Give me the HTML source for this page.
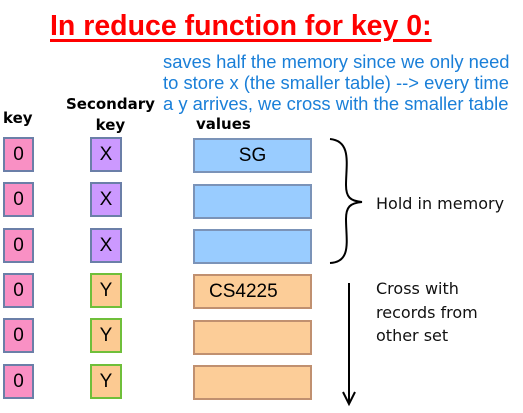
<!DOCTYPE html>
<html><head><style>
body{margin:0;width:523px;height:413px;background:#fff;position:relative;overflow:hidden;font-family:"Liberation Sans",sans-serif}
.a{position:absolute;white-space:nowrap}
.b{position:absolute;box-sizing:border-box;border:2px solid;text-align:center;font-size:19px;color:#000}
.k{left:3px;width:31px;height:35px;background:#f990c4;border-color:#6b7fa8;line-height:31px}
.s{left:90px;width:32px;height:35px;line-height:31px}
.x{background:#cc99ff;border-color:#6b7fa8}
.y{background:#fcca92;border-color:#6fbf3a}
.v{left:193px;width:119px;height:35px;line-height:31px;border-color:#7b93b8;background:#99ccff}
.o{background:#fccd98;border-color:#c09070}
.g{font-family:"DejaVu Sans",sans-serif;font-size:16px;color:#111}
</style></head><body>
<div class="a" style="left:50px;top:10px;font-size:28.5px;font-weight:bold;color:#f00;text-decoration:underline;text-decoration-thickness:3px;text-underline-offset:4px">In reduce function for key 0:</div>
<div class="a" style="left:163px;top:51px;font-size:18.4px;line-height:21px;color:#1a7fd8">saves half the memory since we only need<br>to store x (the smaller table) --&gt; every time<br>a y arrives, we cross with the smaller table</div>
<div class="a" style="left:3px;top:109px;font-weight:bold;font-size:15px;font-family:'DejaVu Sans',sans-serif">key</div>
<div class="a" style="left:66px;top:94px;font-weight:bold;font-size:15px;font-family:'DejaVu Sans',sans-serif;text-align:center;line-height:21px">Secondary<br>key</div>
<div class="a" style="left:196px;top:115px;font-weight:bold;font-size:15px;font-family:'DejaVu Sans',sans-serif">values</div>

<div class="b k" style="top:137px">0</div><div class="b k" style="top:182px">0</div><div class="b k" style="top:228px">0</div>
<div class="b k" style="top:273px">0</div><div class="b k" style="top:318px">0</div><div class="b k" style="top:364px">0</div>
<div class="b s x" style="top:137px">X</div><div class="b s x" style="top:182px">X</div><div class="b s x" style="top:228px">X</div>
<div class="b s y" style="top:273px">Y</div><div class="b s y" style="top:318px">Y</div><div class="b s y" style="top:364px">Y</div>
<div class="b v" style="top:138px">SG</div><div class="b v" style="top:184px"></div><div class="b v" style="top:229px"></div>
<div class="b v o" style="top:274px;text-align:left;padding-left:14px">CS4225</div><div class="b v o" style="top:320px"></div><div class="b v o" style="top:365px"></div>

<svg class="a" style="left:0;top:0" width="523" height="413">
<path d="M330 139 C352 141 346 165 346 185 C346 197 350 201 362 202 C350 203 346 207 346 219 C346 240 352 262 330 263" fill="none" stroke="#000" stroke-width="2"/>
<line x1="349" y1="283" x2="349" y2="402" stroke="#000" stroke-width="2"/>
<path d="M343 392 L349 404 L355 392" fill="none" stroke="#000" stroke-width="2"/>
</svg>
<div class="a g" style="left:376px;top:194px">Hold in memory</div>
<div class="a g" style="left:376px;top:277px;line-height:23.5px">Cross with<br>records from<br>other set</div>
</body></html>
